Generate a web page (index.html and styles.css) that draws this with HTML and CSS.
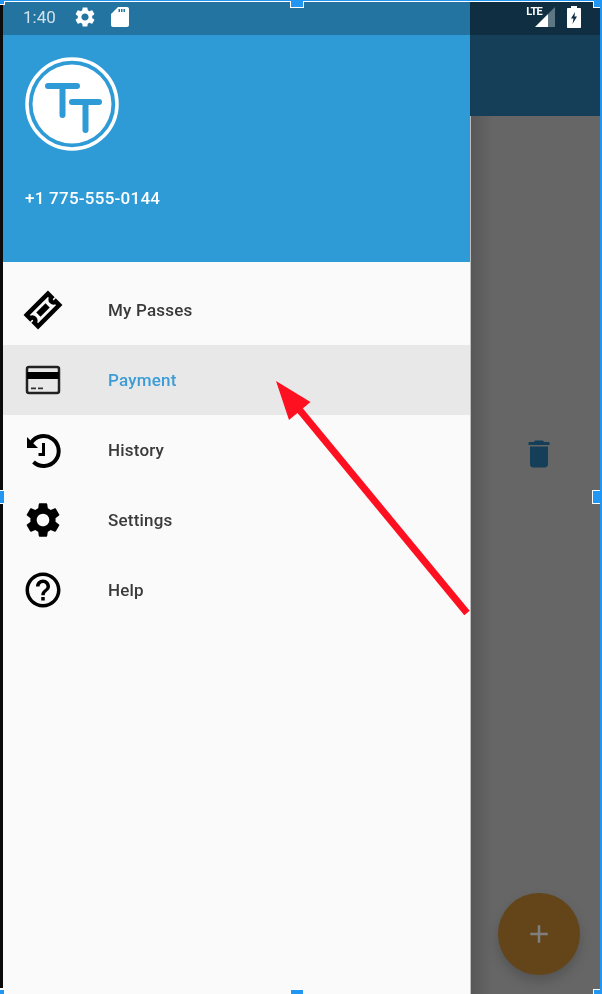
FILE: index.html
```html
<!DOCTYPE html>
<html lang="en">
<head>
    <meta charset="UTF-8">
    <title>Payment menu</title>
    <link rel="stylesheet" href="styles.css">
</head>
<body>
    <div class="frame">
        <div class="screen">
            <div class="drawer">
                <div class="drawer-head">
                    <svg class="logo" viewBox="0 0 94 94">
                        <circle cx="47" cy="47" r="45" fill="none" stroke="#fff" stroke-width="3.500"></circle>
                        <circle cx="47" cy="47" r="39.500" fill="#fff"></circle>
                        <path d="M23 29h29M37.500 29v29M47 45h27M60.500 45v28" fill="none" stroke="#2f9bd6" stroke-width="6" stroke-linecap="round"></path>
                    </svg>
                    <div class="phone">+1 775-555-0144</div>
                </div>
                <ul class="menu">
                    <li>
                        <svg class="icon" viewBox="0 0 42 42"><g transform="rotate(-45 21 21)"><path d="M6 13H36V18a3 3 0 0 0 0 6V29H6V24a3 3 0 0 0 0-6z" fill="none" stroke="#000" stroke-width="4.500"></path><path d="M14.500 18h13v6h-13z"></path></g></svg>
                        <span>My Passes</span>
                    </li>
                    <li class="active">
                        <svg class="icon" viewBox="0 0 42 42"><rect x="5" y="8" width="32" height="26" rx="2" fill="none" stroke="#222" stroke-width="2.500"></rect><path d="M5 13h32v7H5z"></path><path d="M9 28.500h5v1.800H9zM16 28.500h5v1.800h-5z" fill="#333"></path></svg>
                        <span>Payment</span>
                    </li>
                    <li>
                        <svg class="icon icon-history" viewBox="0 0 42 42"><path d="M10 14a15 15 0 1 1 2.500 19" fill="none" stroke="#000" stroke-width="4"></path><path d="M6 8v11h11z"></path><path d="M24 14v13h-6.500v-3H21V14z"></path></svg>
                        <span>History</span>
                    </li>
                    <li>
                        <svg class="icon" viewBox="0 0 24 24"><path d="M19.140 12.940c.04-.3.06-.61.06-.94 0-.32-.02-.64-.07-.94l2.030-1.580c.18-.14.23-.41.12-.61l-1.920-3.320c-.12-.22-.37-.29-.59-.22l-2.390.96c-.5-.38-1.030-.7-1.620-.94l-.36-2.540c-.04-.24-.24-.41-.48-.41h-3.840c-.24 0-.43.17-.47.41l-.36 2.540c-.59.24-1.130.57-1.620.94l-2.390-.96c-.22-.08-.47 0-.59.22L2.740 8.870c-.12.21-.08.47.12.61l2.030 1.580c-.05.3-.09.63-.09.94s.02.64.07.94l-2.030 1.580c-.18.14-.23.41-.12.61l1.920 3.320c.12.22.37.29.59.22l2.390-.96c.5.38 1.030.7 1.620.94l.36 2.540c.05.24.24.41.48.41h3.840c.24 0 .44-.17.47-.41l.36-2.540c.59-.24 1.130-.56 1.620-.94l2.390.96c.22.08.47 0 .59-.22l1.920-3.320c.12-.22.07-.47-.12-.61l-2.010-1.580zM12 15.600c-1.980 0-3.600-1.620-3.600-3.600s1.620-3.600 3.600-3.600 3.600 1.620 3.600 3.600-1.620 3.600-3.600 3.600z"></path></svg>
                        <span>Settings</span>
                    </li>
                    <li>
                        <svg class="icon" viewBox="0 0 24 24"><path d="M11 18h2v-2h-2v2zm1-16C6.480 2 2 6.480 2 12s4.480 10 10 10 10-4.480 10-10S17.520 2 12 2zm0 18c-4.410 0-8-3.590-8-8s3.590-8 8-8 8 3.590 8 8-3.590 8-8 8zm0-14c-2.210 0-4 1.790-4 4h2c0-1.100.9-2 2-2s2 .9 2 2c0 2-3 1.750-3 5h2c0-2.250 3-2.500 3-5 0-2.210-1.790-4-4-4z"></path></svg>
                        <span>Help</span>
                    </li>
                </ul>
            </div>
            <div class="behind">
                <div class="appbar"></div>
                <div class="content">
                    <svg class="trash" viewBox="0 0 24 24"><path d="M6 19c0 1.100.9 2 2 2h8c1.100 0 2-.9 2-2V7H6v12zM19 4h-3.500l-1-1h-5l-1 1H5v2h14V4z"></path></svg>
                    <div class="fab"><svg viewBox="0 0 24 24"><path d="M19 13h-6v6h-2v-6H5v-2h6V5h2v6h6v2z"></path></svg></div>
                </div>
            </div>
            <div class="statusbar">
                <span class="clock">1:40</span>
                <svg class="st-gear" viewBox="0 0 24 24"><path d="M19.140 12.940c.04-.3.06-.61.06-.94 0-.32-.02-.64-.07-.94l2.030-1.580c.18-.14.23-.41.12-.61l-1.920-3.320c-.12-.22-.37-.29-.59-.22l-2.390.96c-.5-.38-1.030-.7-1.620-.94l-.36-2.540c-.04-.24-.24-.41-.48-.41h-3.840c-.24 0-.43.17-.47.41l-.36 2.540c-.59.24-1.130.57-1.620.94l-2.390-.96c-.22-.08-.47 0-.59.22L2.740 8.870c-.12.21-.08.47.12.61l2.030 1.580c-.05.3-.09.63-.09.94s.02.64.07.94l-2.030 1.580c-.18.14-.23.41-.12.61l1.920 3.320c.12.22.37.29.59.22l2.390-.96c.5.38 1.030.7 1.620.94l.36 2.540c.05.24.24.41.48.41h3.840c.24 0 .44-.17.47-.41l.36-2.540c.59-.24 1.130-.56 1.620-.94l2.390.96c.22.08.47 0 .59-.22l1.920-3.320c.12-.22.07-.47-.12-.61l-2.010-1.580zM12 15.600c-1.980 0-3.600-1.620-3.600-3.600s1.620-3.600 3.600-3.600 3.600 1.620 3.600 3.600-1.620 3.600-3.600 3.600z"></path></svg>
                <svg class="st-sd" viewBox="0 0 18 20"><path d="M16 0H7L0 7v11c0 1.100.9 2 2 2h14c1.100 0 2-.9 2-2V2c0-1.100-.9-2-2-2zM9 5H7.500V2H9zm2.500 0H10V2h1.500zM14 5h-1.500V2H14z"></path></svg>
                <span class="spacer"></span>
                <span class="lte">LTE</span>
                <svg class="st-signal" viewBox="0 0 20 20"><path d="M20 0v20H13V7z" fill="#5f7683"></path><path d="M0 20 13 7v13z" fill="#fff"></path></svg>
                <svg class="st-batt" viewBox="0 0 14 22"><path d="M4 0h6v2h3c.6 0 1 .4 1 1v18c0 .6-.4 1-1 1H1c-.6 0-1-.4-1-1V3c0-.6.4-1 1-1h3z" fill="#fff"></path><path d="M8 6 4 12.500h2.500L5.500 18 10 10.500H7.500z" fill="#112f42"></path></svg>
            </div>
        </div>

        <!-- annotation drawn on top of the screenshot -->
        <svg class="arrow" viewBox="0 0 602 994">
            <path d="M467 613 298 408" stroke="#ff1020" stroke-width="7" fill="none"></path>
            <path d="M276 381 310.500 402 289 420z" fill="#ff1020"></path>
        </svg>

        <i class="handle h-tl"></i>
        <i class="handle h-tc"></i>
        <i class="handle h-tr"></i>
        <i class="handle h-ml"></i>
        <i class="handle h-mr"></i>
        <i class="handle h-bl"></i>
        <i class="handle h-bc"></i>
        <i class="handle h-br"></i>
    </div>
</body>
</html>
```

FILE: styles.css
```css
html, body{
    margin:0;
    height:100%;
    overflow:hidden;
    background:#fff;
}
.frame{
    position:relative;
    width:602px;
    height:994px;
    box-sizing:border-box;
    padding:1px 2px 0 3px;
    overflow:hidden;
    background:linear-gradient(to right, #0b0b0b 3px, transparent 3px) no-repeat 0 0 / 100% 987px;
    border-top:1px solid #2196f3;
    font-family:Roboto, "Liberation Sans", sans-serif;
}
.frame::after{
    content:"";
    position:absolute;
    top:0;
    right:0;
    bottom:0;
    width:2px;
    background:#2196f3;
}
.screen{
    position:relative;
    display:flex;
    height:100%;
    overflow:hidden;
    filter:blur(.45px);
}
.drawer{
    width:467px;
    flex:none;
    display:flex;
    flex-direction:column;
    background:#fafafa;
}
.drawer-head{
    height:227px;
    margin-top:33px;
    padding:22px 0 0 22px;
    box-sizing:border-box;
    background:#2f9bd6;
    position:relative;
}
.drawer-head::before{
    content:"";
    position:absolute;
    left:0;
    right:0;
    top:-33px;
    height:33px;
    background:#2f9bd6;
}
.logo{
    display:block;
    width:94px;
    height:94px;
}
.phone{
    margin-top:37px;
    font-size:17px;
    line-height:20px;
    font-weight:500;
    letter-spacing:.25px;
    color:#fff;
}
.menu{
    list-style:none;
    margin:0;
    padding:13px 0 0;
}
.menu li{
    display:flex;
    align-items:center;
    height:70px;
    padding-left:19px;
    font-size:17px;
    font-weight:500;
    letter-spacing:.2px;
    color:#3a3a3a;
}
.menu li span{
    margin-left:44px;
}
.menu .active{
    background:#e8e8e8;
    color:#3b9cd6;
}
.icon{
    width:42px;
    height:42px;
    flex:none;
}
.icon-history{
    margin:0 1px 0 -1px;
}
.behind{
    flex:1;
    display:flex;
    flex-direction:column;
    background:#666;
}
.appbar{
    height:114px;
    flex:none;
    background:#153e58;
}
.content{
    flex:1;
    display:flex;
    flex-direction:column;
    align-items:center;
    padding:320px 0 0 7px;
    background:linear-gradient(to right, #585858, #666 22px);
    border-left:1px solid #bdbdbd;
}
.trash{
    width:36px;
    height:36px;
    fill:#153e58;
}
.fab{
    width:82px;
    height:82px;
    margin-top:421px;
    border-radius:50%;
    display:flex;
    align-items:center;
    justify-content:center;
    background:#634519;
    box-shadow:0 6px 12px rgba(0,0,0,.18);
}
.fab svg{
    width:30px;
    height:30px;
    fill:#7f7f7f;
}
.statusbar{
    position:absolute;
    top:0;
    left:0;
    right:0;
    height:33px;
    box-sizing:border-box;
    padding-bottom:4px;
    display:flex;
    align-items:center;
    background:rgba(0,0,0,.25);
    fill:#fff;
}
.clock{
    margin-left:20px;
    font-size:17px;
    color:#d3e2ea;
}
.st-gear{
    width:24px;
    height:24px;
    margin-left:17px;
}
.st-sd{
    width:18px;
    height:20px;
    margin-left:14px;
}
.spacer{
    flex:1;
}
.lte{
    font-size:11px;
    font-weight:700;
    color:#fff;
    align-self:flex-start;
    margin-top:3px;
    letter-spacing:-.7px;
}
.st-signal{
    width:20px;
    height:20px;
    margin:0 12px 0 -7px;
}
.st-batt{
    width:14px;
    height:22px;
    margin-right:19px;
}
.arrow{
    position:absolute;
    top:-1px;
    left:0;
    width:602px;
    height:994px;
}
.handle{
    position:absolute;
    box-sizing:border-box;
    width:14px;
    height:14px;
    background:#2196f3;
    border:1px solid #fff;
}
.h-tl{ top:-10px; left:-9px; }
.h-tc{ top:-7px; left:290px; }
.h-tr{ top:-7px; right:-5px; }
.h-ml{ top:489px; left:-9px; }
.h-mr{ top:489px; right:-4px; }
.h-bl{ bottom:-9px; left:-9px; }
.h-bc{ bottom:-9px; left:290px; }
.h-br{ bottom:-9px; right:-5px; }
```
